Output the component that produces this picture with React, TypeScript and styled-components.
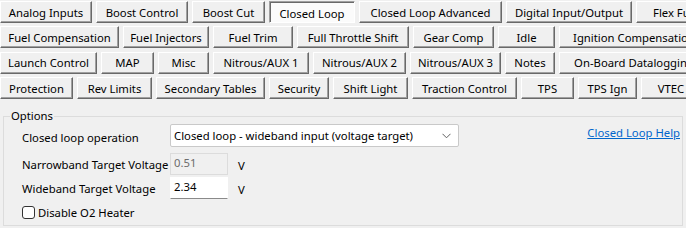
import React, { useState } from 'react';
import styled, { createGlobalStyle } from 'styled-components';

const GlobalStyle = createGlobalStyle`
  html, body {
    margin: 0;
    padding: 0;
    background: #f0f0f0;
  }
  body {
    font-family: "Noto Sans", "Open Sans", sans-serif;
    font-size: 11.3px;
    color: #000;
  }
`

const Window = styled.div`
  width: 686px;
  height: 228px;
  overflow: hidden;
  background: #f0f0f0;
`

const TabStrip = styled.div`
  display: flex;
  flex-direction: column;
  gap: 3.4px;
  padding-top: 1px;
  width: 900px;
`

const TabRow = styled.div`
  display: flex;
  gap: 4px;
  height: 22px;
`

const Tab = styled.button<{ $w: number; $active?: boolean }>`
  box-sizing: border-box;
  flex: 0 0 ${p => p.$w}px;
  height: 22px;
  padding: 0;
  font: inherit;
  color: #000;
  white-space: nowrap;
  background: ${p => (p.$active ? '#fbfbfb' : '#f0f0f0')};
  border: 1px solid;
  border-color: ${p => (p.$active ? '#a0a0a0 #fff #fff #a0a0a0' : '#fff #696969 #696969 #fff')};
  box-shadow: ${p => (p.$active ? 'inset 1px 1px 0 #696969' : 'inset -1px -1px 0 #a0a0a0')};
  padding-top: ${p => (p.$active ? '2px' : '0')};
  cursor: default;
`

const Page = styled.div`
  padding: 9px 3px 0 3px;
`

const GroupBox = styled.fieldset`
  margin: 0;
  height: 118px;
  box-sizing: border-box;
  border: 1px solid #dcdcdc;
  padding: 0;
  width: 680px;
`

const Legend = styled.legend`
  padding: 0 1px;
  margin-left: 6px;
  line-height: 16px;
`

const Body = styled.div`
  display: flex;
  justify-content: space-between;
  padding-left: 18px;
`

const Form = styled.div`
  display: flex;
  flex-direction: column;
`

const FormRow = styled.div<{ $h: number; $mt: number }>`
  display: grid;
  grid-template-columns: 148px auto;
  align-items: center;
  height: ${p => p.$h}px;
  margin-top: ${p => p.$mt}px;
`

const Label = styled.span<{ $dy?: number }>`
  white-space: nowrap;
  padding-top: ${p => p.$dy ?? 0}px;
`

const SelectBox = styled.div`
  box-sizing: border-box;
  width: 289px;
  height: 23px;
  background: #fff;
  border: 1px solid #c9c9c9;
  border-radius: 2px;
  display: flex;
  align-items: center;
  justify-content: space-between;
  padding: 0 7px 0 3px;
  white-space: nowrap;
`

const FieldRow = styled.div`
  display: flex;
  align-items: center;
  gap: 10px;
`

const TextBox = styled.div<{ $disabled?: boolean }>`
  box-sizing: border-box;
  width: 58px;
  height: 22px;
  padding: 1px 3px;
  background: ${p => (p.$disabled ? '#f0f0f0' : '#fff')};
  color: ${p => (p.$disabled ? '#6d6d6d' : '#000')};
  border: 1px solid ${p => (p.$disabled ? '#dcdcdc' : '#fff')};
  border-bottom-color: ${p => (p.$disabled ? '#dcdcdc' : '#8a8a8a')};
  line-height: 16px;
`

const Unit = styled.span`
  padding-top: 3px;
`

const CheckLabel = styled.label`
  display: flex;
  align-items: center;
  gap: 3px;
  white-space: nowrap;
  margin-top: 7px;
  height: 13px;
`

const CheckBox = styled.span<{ $on: boolean }>`
  box-sizing: border-box;
  width: 13px;
  height: 13px;
  border: 1px solid #333;
  border-radius: 3px;
  background: ${p => (p.$on ? '#0067c0' : '#fff')};
`

const HelpLink = styled.a`
  color: #0066cc;
  text-decoration: underline;
  margin: 1px 2px 0 0;
  line-height: 16px;
  white-space: nowrap;
  align-self: flex-start;
`

const rows: { label: string; w: number }[][] = [
  [
    { label: 'Analog Inputs', w: 92 },
    { label: 'Boost Control', w: 92 },
    { label: 'Boost Cut', w: 73 },
    { label: 'Closed Loop', w: 86 },
    { label: 'Closed Loop Advanced', w: 143 },
    { label: 'Digital Input/Output', w: 126 },
    { label: 'Flex Fuel', w: 80 },
  ],
  [
    { label: 'Fuel Compensation', w: 119 },
    { label: 'Fuel Injectors', w: 86 },
    { label: 'Fuel Trim', w: 80 },
    { label: 'Full Throttle Shift', w: 112 },
    { label: 'Gear Comp', w: 81 },
    { label: 'Idle', w: 57 },
    { label: 'Ignition Compensation', w: 150 },
  ],
  [
    { label: 'Launch Control', w: 97 },
    { label: 'MAP', w: 53 },
    { label: 'Misc', w: 51 },
    { label: 'Nitrous/AUX 1', w: 96 },
    { label: 'Nitrous/AUX 2', w: 93 },
    { label: 'Nitrous/AUX 3', w: 91 },
    { label: 'Notes', w: 50 },
    { label: 'On-Board Datalogging', w: 150 },
  ],
  [
    { label: 'Protection', w: 73 },
    { label: 'Rev Limits', w: 75 },
    { label: 'Secondary Tables', w: 109 },
    { label: 'Security', w: 60 },
    { label: 'Shift Light', w: 75 },
    { label: 'Traction Control', w: 105 },
    { label: 'TPS', w: 53 },
    { label: 'TPS Ign', w: 59 },
    { label: 'VTEC', w: 60 },
  ],
]

const Chevron = () => (
  <svg width="9" height="6" viewBox="0 0 9 6">
    <path d="M0.5 0.8 L4.5 4.8 L8.5 0.8" fill="none" stroke="#606060" strokeWidth="1" />
  </svg>
)

export default function App() {
  const [active, setActive] = useState('Closed Loop');
  const [heaterOff, setHeaterOff] = useState(false);

  return (
    <Window>
      <GlobalStyle />
      <TabStrip>
        {rows.map((row, i) => (
          <TabRow key={i}>
            {row.map(t => (
              <Tab key={t.label} $w={t.w} $active={t.label === active} onClick={() => setActive(t.label)}>
                {t.label}
              </Tab>
            ))}
          </TabRow>
        ))}
      </TabStrip>
      <Page>
        <GroupBox>
          <Legend>Options</Legend>
          <Body>
            <Form>
              <FormRow $h={23} $mt={0}>
                <Label $dy={4}>Closed loop operation</Label>
                <SelectBox>
                  <span>Closed loop - wideband input (voltage target)</span>
                  <Chevron />
                </SelectBox>
              </FormRow>
              <FormRow $h={22} $mt={6}>
                <Label>Narrowband Target Voltage</Label>
                <FieldRow>
                  <TextBox $disabled>0.51</TextBox>
                  <Unit>V</Unit>
                </FieldRow>
              </FormRow>
              <FormRow $h={22} $mt={2}>
                <Label>Wideband Target Voltage</Label>
                <FieldRow>
                  <TextBox>2.34</TextBox>
                  <Unit>V</Unit>
                </FieldRow>
              </FormRow>
              <CheckLabel onClick={() => setHeaterOff(v => !v)}>
                <CheckBox $on={heaterOff} />
                Disable O2 Heater
              </CheckLabel>
            </Form>
            <HelpLink href="#">Closed Loop Help</HelpLink>
          </Body>
        </GroupBox>
      </Page>
    </Window>
  );
}
